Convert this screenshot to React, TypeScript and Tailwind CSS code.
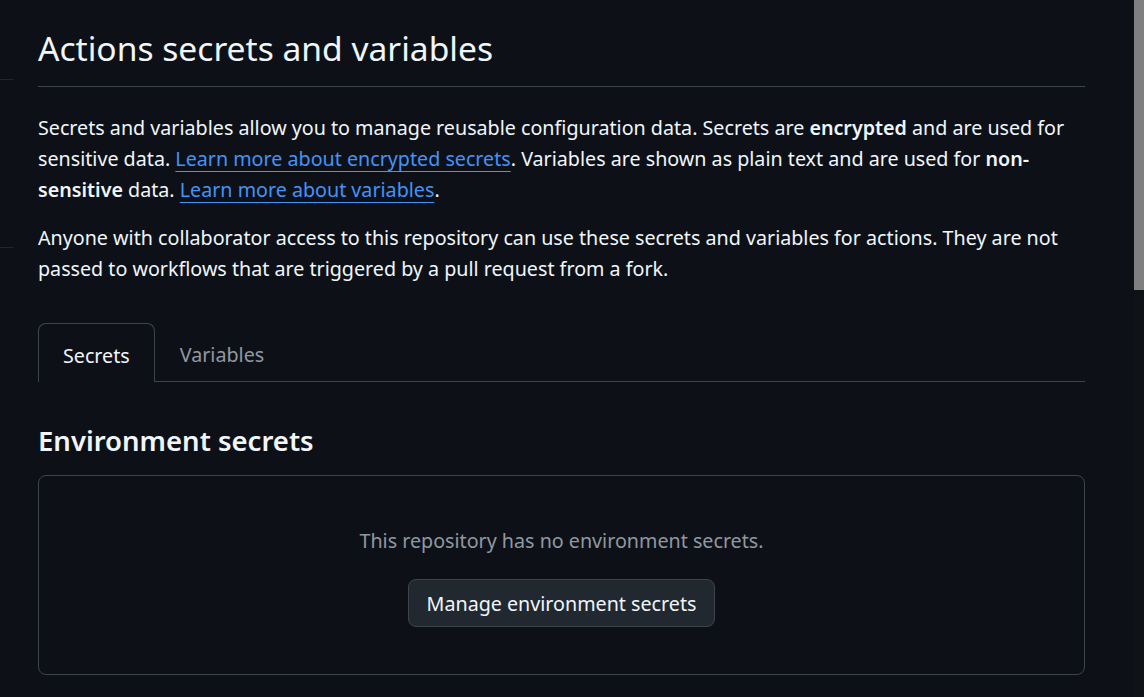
import React from "react";

const font = { fontFamily: '"Noto Sans", "Open Sans", sans-serif' };

const App = () => {
  return (
    <div className="flex h-[697px] w-full overflow-hidden bg-[#0d1117] text-[#f0f6fc]" style={font}>
      {/* cut-off sidebar */}
      <div className="w-[13px] shrink-0">
        <div className="mt-[79px] border-t border-[#21262d]" />
        <div className="mt-[167px] border-t border-[#21262d]" />
      </div>

      {/* Main */}
      <main className="flex-1 pl-[25px] pr-[49px]">
        <div className="border-b border-[#3d444d] pt-[25px] pb-[15px]">
          <h2 className="text-[33.6px] leading-[46px] font-normal">Actions secrets and variables</h2>
        </div>

        <p className="mt-[25px] text-[19.7px] leading-[31px]">
          Secrets and variables allow you to manage reusable configuration data. Secrets are{" "}
          <b className="font-semibold">encrypted</b> and are used for sensitive data.{" "}
          <a className="text-[#4493f8] underline underline-offset-[5px]">Learn more about encrypted secrets</a>.
          Variables are shown as plain text and are used for <b className="font-semibold">non-sensitive</b> data.{" "}
          <a className="text-[#4493f8] underline underline-offset-[5px]">Learn more about variables</a>.
        </p>
        <p className="mt-[17px] text-[19.7px] leading-[31px]">
          Anyone with collaborator access to this repository can use these secrets and variables for actions. They are
          not passed to workflows that are triggered by a pull request from a fork.
        </p>

        {/* Tabs */}
        <div className="mt-[39px] flex border-b border-[#3d444d]">
          <div className="-mb-px flex h-[59px] items-center rounded-t-[8px] border border-b-0 border-[#3d444d] bg-[#0d1117] px-[24px] pt-[5px] text-[19.7px]">
            Secrets
          </div>
          <div className="flex h-[58px] items-center px-[25px] pt-[5px] text-[19.7px] text-[#9198a1]">Variables</div>
        </div>

        <h3 className="mt-[40px] text-[27.5px] leading-[38px] font-semibold">Environment secrets</h3>

        <div className="mt-[15px] flex h-[200px] flex-col items-center rounded-[8px] border border-[#3d444d] pt-[49px]">
          <p className="text-[19.7px] leading-[31px] text-[#9198a1]">This repository has no environment secrets.</p>
          <button className="mt-[23px] h-[48px] rounded-[8px] border border-[#3d444d] bg-[#212830] px-[18px] pt-[2px] text-[19.7px] text-[#f0f6fc]">
            Manage environment secrets
          </button>
        </div>
      </main>

      {/* Scrollbar */}
      <div className="w-[10px] shrink-0 bg-[#0f1318]">
        <div className="h-[290px] bg-[#7f7f7f]" />
      </div>
    </div>
  );
};

export default App;
